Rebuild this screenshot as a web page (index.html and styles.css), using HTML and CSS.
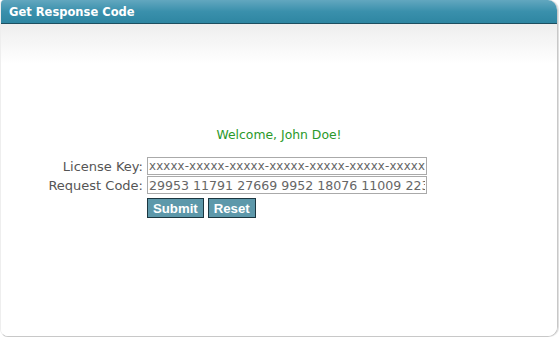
FILE: index.html
```html
<!DOCTYPE html>
<html lang="en">
<head>
  <meta charset="UTF-8">
  <title>Get Response Code</title>
  <link rel="stylesheet" href="styles.css">
</head>
<body>
  <div class="panel">
    <div class="panel-header">Get Response Code</div>
    <div class="panel-body">
      <p class="welcome">Welcome, John Doe!</p>
      <form class="code-form" onsubmit="return false;">
        <label for="licenseKey">License Key:</label>
        <input type="text" id="licenseKey" class="field field-key" value="xxxxx-xxxxx-xxxxx-xxxxx-xxxxx-xxxxx-xxxxx">
        <label for="requestCode">Request Code:</label>
        <input type="text" id="requestCode" class="field" value="29953 11791 27669 9952 18076 11009 22394">
        <span></span>
        <div class="buttons">
          <button type="submit" class="btn">Submit</button>
          <button type="reset" class="btn">Reset</button>
        </div>
      </form>
    </div>
  </div>
</body>
</html>
```
FILE: styles.css
```css
body {
  margin: 0;
  background-color: white;
  font-family: "DejaVu Sans", Verdana, sans-serif;
}

.panel {
  width: 556px;
  height: 336px;
  border: 1px solid #c8c8c8;
  border-top: none;
  border-left-color: #eeeeee;
  border-radius: 4px 10px 10px 8px;
  overflow: hidden;
  box-shadow: 1px 0 1px #dddddd;
}

.panel-header {
  height: 23px;
  line-height: 24px;
  padding-left: 8px;
  color: white;
  font-size: 11.5px;
  font-weight: bold;
  background: linear-gradient(#62a7bf, #3a90ac 50%, #2e86a2);
  border-bottom: 1px solid #1d4f60;
}

.panel-body {
  height: 312px;
  background: linear-gradient(#eeeeee, #ffffff 40px);
  padding-top: 1px;
}

.welcome {
  margin: 102px 0 0;
  text-align: center;
  color: #2a992a;
  font-size: 12.4px;
}

.code-form {
  display: grid;
  grid-template-columns: 146px 280px;
  row-gap: 1px;
  margin-top: 15px;
  align-items: center;
}

.code-form label {
  text-align: right;
  padding-right: 4px;
  color: #555555;
  font-size: 13px;
}

.field {
  box-sizing: border-box;
  width: 280px;
  height: 18px;
  margin: 0;
  padding: 0 1px;
  border: 1px solid #aaaaaa;
  color: #666666;
  font-family: "DejaVu Sans", Verdana, sans-serif;
  font-size: 12.6px;
}

.field-key {
  font-size: 11.8px;
  letter-spacing: 0.15px;
}

.buttons {
  display: flex;
  gap: 4px;
  margin-top: 3px;
}

.btn {
  height: 20px;
  padding: 0 5px;
  background-color: #5d98aa;
  border: 1px solid #1b3640;
  color: white;
  font-family: "Liberation Sans", Arial, sans-serif;
  font-size: 13.2px;
  font-weight: bold;
}
```
